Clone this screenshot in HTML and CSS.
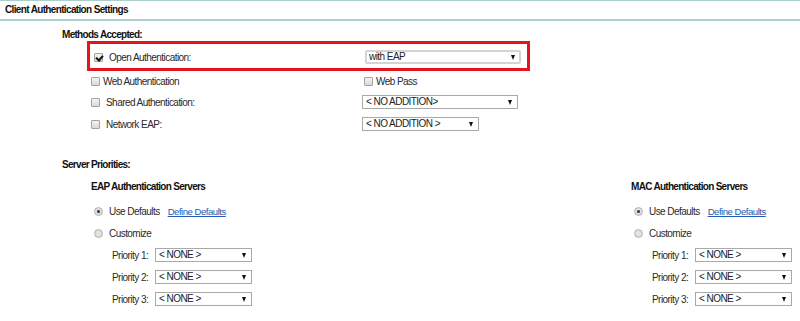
FILE: index.html
```html
<!DOCTYPE html>
<html>
<head>
<meta charset="utf-8">
<link rel="stylesheet" href="styles.css">
</head>
<body>
<div class="hdr">Client Authentication Settings</div>

<div class="methods">
  <div class="heading">Methods Accepted:</div>
  <div class="redbox">
    <div class="row row-open">
      <div class="cell"><span class="cb checked"></span><span class="lbl">Open Authentication:</span></div>
      <div class="sel sel-wide sel-soft">with EAP</div>
    </div>
  </div>
  <div class="rows">
    <div class="row row-web">
      <div class="cell"><span class="cb"></span><span class="lbl lbl-tight">Web Authentication</span></div>
      <div class="cell cell-pass"><span class="cb"></span><span class="lbl lbl-tight">Web Pass</span></div>
    </div>
    <div class="row">
      <div class="cell"><span class="cb"></span><span class="lbl">Shared Authentication:</span></div>
      <div class="sel sel-wide">&lt; NO ADDITION&gt;</div>
    </div>
    <div class="row">
      <div class="cell"><span class="cb"></span><span class="lbl">Network EAP:</span></div>
      <div class="sel sel-mid">&lt; NO ADDITION &gt;</div>
    </div>
  </div>
</div>

<div class="servers">
  <div class="heading">Server Priorities:</div>
  <div class="cols">
    <div class="col">
      <div class="coltitle">EAP Authentication Servers</div>
      <div class="rrow"><span class="rd checked"></span><span class="lbl">Use Defaults</span><a class="link" href="#">Define Defaults</a></div>
      <div class="rrow"><span class="rd"></span><span class="lbl">Customize</span></div>
      <div class="prow"><span class="plbl">Priority 1:</span><div class="sel sel-small">&lt; NONE &gt;</div></div>
      <div class="prow"><span class="plbl">Priority 2:</span><div class="sel sel-small">&lt; NONE &gt;</div></div>
      <div class="prow"><span class="plbl">Priority 3:</span><div class="sel sel-small">&lt; NONE &gt;</div></div>
    </div>
    <div class="col">
      <div class="coltitle">MAC Authentication Servers</div>
      <div class="rrow"><span class="rd checked"></span><span class="lbl">Use Defaults</span><a class="link" href="#">Define Defaults</a></div>
      <div class="rrow"><span class="rd"></span><span class="lbl">Customize</span></div>
      <div class="prow"><span class="plbl">Priority 1:</span><div class="sel sel-small">&lt; NONE &gt;</div></div>
      <div class="prow"><span class="plbl">Priority 2:</span><div class="sel sel-small">&lt; NONE &gt;</div></div>
      <div class="prow"><span class="plbl">Priority 3:</span><div class="sel sel-small">&lt; NONE &gt;</div></div>
    </div>
  </div>
</div>
</body>
</html>
```

FILE: styles.css
```css
* { box-sizing: border-box; }
html, body { margin: 0; padding: 0; background: #fff; }
body {
  width: 800px;
  height: 321px;
  overflow: hidden;
  font-family: "Liberation Sans", Arial, sans-serif;
  font-size: 10px;
  letter-spacing: -0.55px;
  color: #2a2a2a;
  white-space: nowrap;
}

.hdr {
  height: 21px;
  border-top: 1px solid #a9cfcf;
  border-bottom: 2px solid #a9cfcf;
  padding-left: 5px;
  line-height: 18px;
  font-weight: bold;
  letter-spacing: -0.65px;
  color: #111;
}

.heading {
  font-weight: bold;
  letter-spacing: -0.7px;
  color: #111;
  line-height: 13px;
}

.methods { padding-left: 62px; padding-top: 7px; }

.redbox {
  margin-left: 25px;
  width: 443px;
  height: 30px;
  border: 3px solid #e3141e;
  padding: 1px 0 0 4px;
}

.rows { padding-left: 29px; }

.row {
  display: flex;
  align-items: center;
  height: 22px;
}
.row-open { height: 24px; }
.row-web { height: 20px; }

.cell {
  display: flex;
  align-items: center;
  width: 271px;
}
.cell-pass { padding-left: 2px; }

.lbl { margin-left: 6px; }
.lbl-tight { margin-left: 3px; }

.cb {
  display: inline-block;
  flex: none;
  width: 9px;
  height: 9px;
  border: 1px solid #a3a3a3;
  border-radius: 1px;
  background: linear-gradient(#f4f4f4, #d9d9d9);
  position: relative;
}
.cb.checked::after {
  content: "";
  position: absolute;
  left: 2px;
  top: 0px;
  width: 3px;
  height: 5px;
  border-right: 2px solid #111;
  border-bottom: 2px solid #111;
  transform: rotate(40deg);
}

.sel {
  position: relative;
  flex: none;
  height: 14px;
  border: 1px solid #a9a9a9;
  background: #fff;
  line-height: 12px;
  padding-left: 3px;
  color: #222;
}
.sel::after {
  content: "";
  position: absolute;
  right: 5px;
  top: 4px;
  border-left: 2.5px solid transparent;
  border-right: 2.5px solid transparent;
  border-top: 5px solid #111;
}
.sel-wide { width: 156px; }
.sel-mid { width: 117px; }
.sel-small { width: 97px; }
.sel-soft {
  border: 2px solid #d4d4d4;
  border-radius: 2px;
  line-height: 10px;
  padding-left: 2px;
}
.sel-soft::after { right: 4px; top: 3px; }

.servers { padding-left: 62px; padding-top: 23px; }

.cols {
  display: flex;
  padding-top: 9px;
  padding-left: 29px;
}
.col { width: 540px; flex: none; }
.col:last-child { width: 165px; }

.coltitle {
  font-weight: bold;
  letter-spacing: -0.7px;
  color: #111;
  line-height: 14px;
  margin-bottom: 6px;
}

.rrow {
  display: flex;
  align-items: center;
  height: 22px;
  padding-left: 3px;
}

.rd {
  display: inline-block;
  flex: none;
  width: 9px;
  height: 9px;
  border-radius: 50%;
  border: 1px solid #b3b3b3;
  background: radial-gradient(circle, #e8e8e8 0, #d6d6d6 100%);
  position: relative;
}
.rd.checked::after {
  content: "";
  position: absolute;
  left: 2px;
  top: 2px;
  width: 3px;
  height: 3px;
  border-radius: 50%;
  background: #333;
}

.link {
  margin-left: 8px;
  color: #1f5bb0;
  font-size: 9.6px;
  letter-spacing: -0.5px;
  text-decoration: underline;
}

.prow {
  display: flex;
  align-items: center;
  height: 22px;
  padding-left: 21px;
}
.plbl { width: 43px; flex: none; }
```
